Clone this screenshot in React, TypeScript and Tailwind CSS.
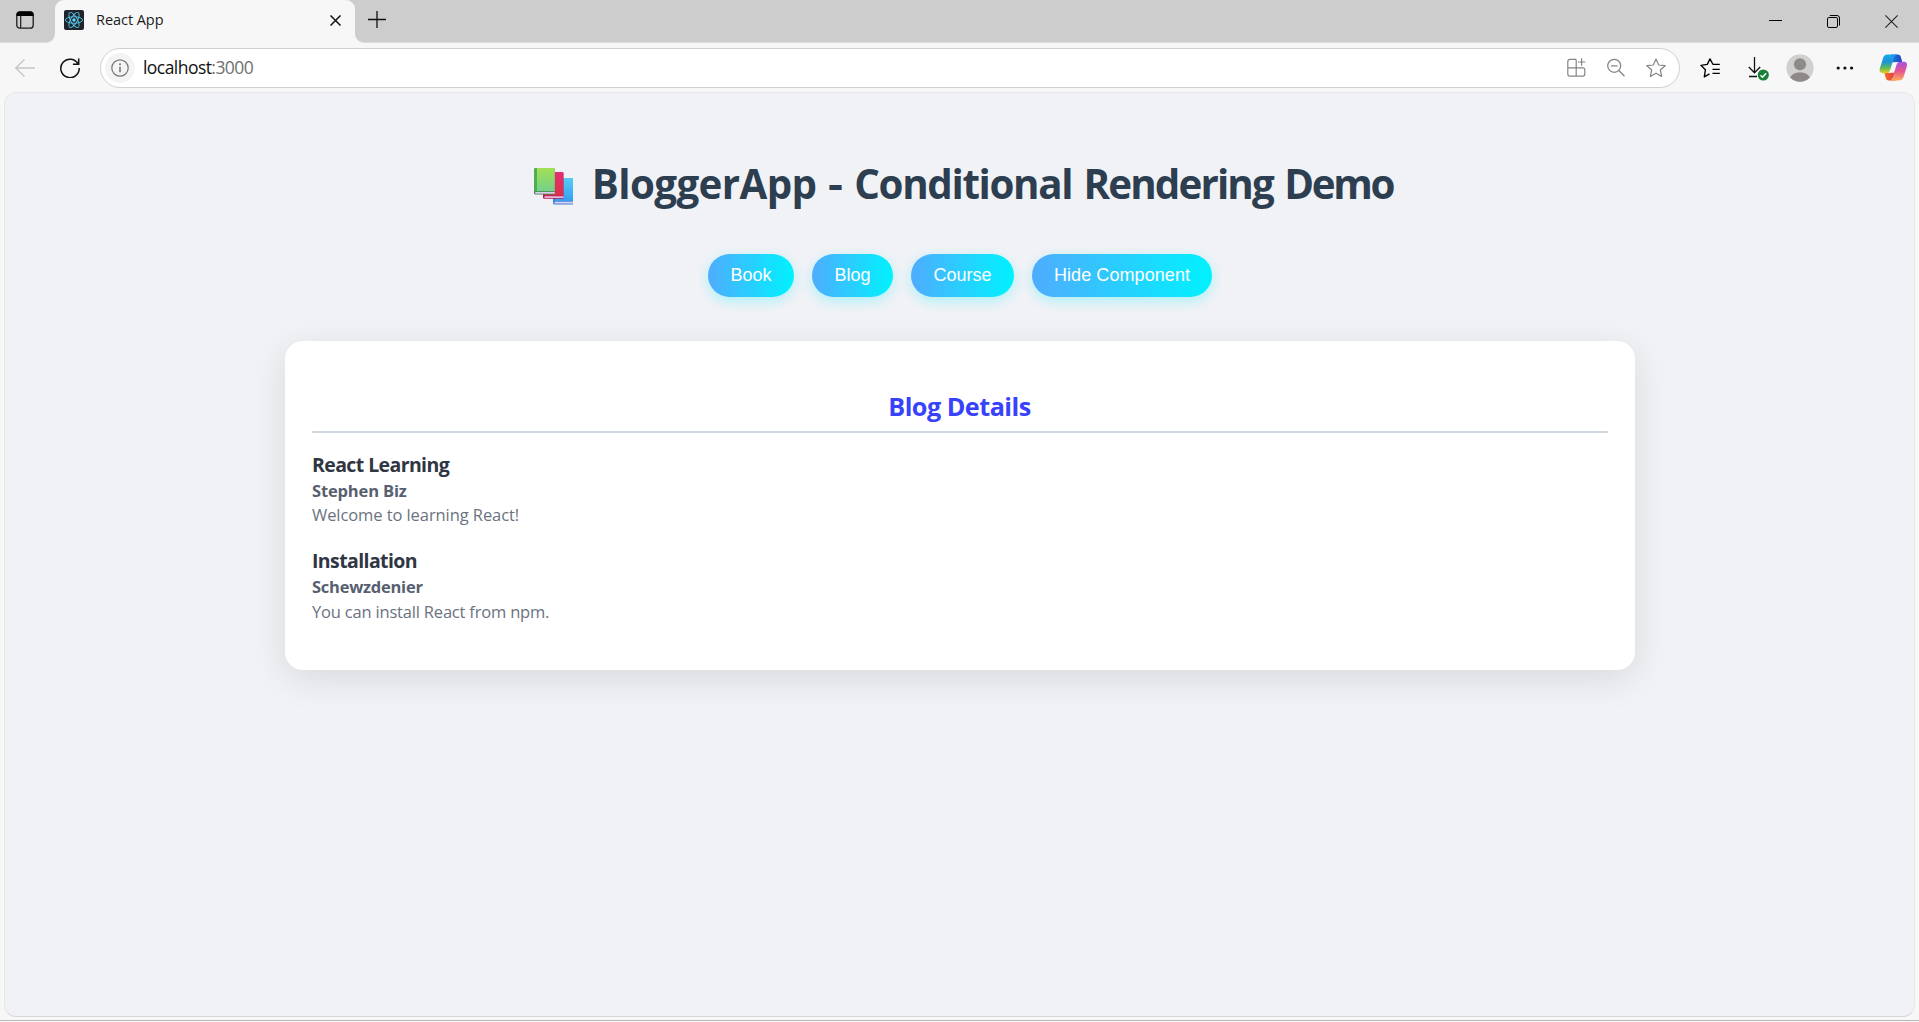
import React from "react";

const posts = [
  { title: "React Learning", titleCls: "tracking-[-0.6px]", author: "Stephen Biz", authorCls: "tracking-[-0.15px]", text: "Welcome to learning React!", textCls: "tracking-[-0.08px]", leading: "leading-[23px]" },
  { title: "Installation", titleCls: "tracking-[-0.6px]", author: "Schewzdenier", authorCls: "tracking-[-0.25px]", text: "You can install React from npm.", textCls: "tracking-[-0.19px]", leading: "leading-[25px]" },
];

function TabStrip() {
  return (
    <div className="flex h-[43px] bg-[#f7f7f7]">
      <div className="flex h-[43px] w-[55px] items-start rounded-br-[9px] border-b border-[#dcdcdc] bg-[#cdcdcd] pt-[11px] pl-4">
        <svg width="18" height="18" viewBox="0 0 18 18" fill="none">
          <rect x="0.8" y="0.8" width="16.4" height="16.4" rx="3" stroke="#1b1b1b" strokeWidth="1.3" />
          <path d="M0.6 5V3.5A3 3 0 0 1 3.6 .5h10.8a3 3 0 0 1 3 3V5z" fill="#000" />
          <path d="M4.7 5v12" stroke="#1b1b1b" strokeWidth="1.2" />
        </svg>
      </div>
      <div className="h-[42px] w-[300px] bg-[#cdcdcd]">
        <div className="flex h-[43px] items-start rounded-t-[9px] bg-[#f7f7f7] pl-[9px]">
          <svg className="mt-[10px]" width="20" height="20" viewBox="0 0 20 20" fill="none">
            <rect width="20" height="20" rx="2" fill="#20232a" />
            <g stroke="#53c1de" strokeWidth="0.95">
              <ellipse cx="10" cy="10" rx="8.6" ry="3.3" />
              <ellipse cx="10" cy="10" rx="8.6" ry="3.3" transform="rotate(60 10 10)" />
              <ellipse cx="10" cy="10" rx="8.6" ry="3.3" transform="rotate(120 10 10)" />
            </g>
            <circle cx="10" cy="10" r="1.7" fill="#61dafb" />
          </svg>
          <span className="mt-[10px] ml-3 w-[234px] text-[14.5px] leading-5 tracking-[-0.05px] text-[#1b1b1b]">React App</span>
          <svg className="mt-[15px]" width="11" height="11" viewBox="0 0 11 11" stroke="#111" strokeWidth="1.5">
            <path d="M.5.5l10 10M10.5.5l-10 10" />
          </svg>
        </div>
      </div>
      <div className="flex h-[43px] flex-1 items-start rounded-bl-[9px] border-b border-[#dcdcdc] bg-[#cdcdcd]">
        <svg className="mt-[11px] ml-[13px]" width="18" height="18" viewBox="0 0 18 18" stroke="#111" strokeWidth="1.3">
          <path d="M9 0v17M0 8.5h18" />
        </svg>
        <div className="flex-1" />
        <svg className="mt-[14px] mr-[45px]" width="13" height="14" viewBox="0 0 13 14">
          <path d="M0 6.5h13" stroke="#000" />
        </svg>
        <svg className="mt-[15px] mr-[45px]" width="13" height="13" viewBox="0 0 13 13" fill="none" stroke="#000">
          <rect x=".5" y="2.5" width="10" height="10" rx="1.4" />
          <path d="M2.8 .5H10a2.5 2.5 0 0 1 2.5 2.5v7.5" />
        </svg>
        <svg className="mt-[15px] mr-[21px]" width="13" height="13" viewBox="0 0 13 13" stroke="#222" strokeWidth="1.1">
          <path d="M.4.4l12.2 12.2M12.6.4L.4 12.6" />
        </svg>
      </div>
    </div>
  );
}

const star = "M10 1l2.7 6 6.5.7-4.9 4.3 1.4 6.5L10 15.2l-5.7 3.3 1.4-6.5L.8 7.7l6.5-.7z";

function Toolbar() {
  return (
    <div className="flex h-[49px] items-center bg-[#f7f7f7]">
      <svg className="ml-[15px]" width="20" height="18" viewBox="0 0 20 18" fill="none" stroke="#c6c6c6" strokeWidth="1.3">
        <path d="M20 9H.8M9.5.5L.8 9l8.7 8.5" />
      </svg>
      <svg className="ml-[25px]" width="20" height="20" viewBox="0 0 20 20" fill="none" stroke="#111" strokeWidth="1.5">
        <path d="M18.2 6.2A9.2 9.2 0 1 0 19.2 10M18.7 .5v5.8h-5.8" />
      </svg>
      <div className="ml-5 flex h-10 w-[1580px] items-center rounded-full border border-[#d0d0d0] bg-white pl-1">
        <div className="flex size-[30px] items-center justify-center rounded-full bg-[#f4f4f4]">
          <svg width="18" height="18" viewBox="0 0 18 18" fill="none" stroke="#757575" strokeWidth="1.2">
            <circle cx="9" cy="9" r="8.2" />
            <path d="M9 7.8v5.4" strokeWidth="1.6" />
            <circle cx="9" cy="5.3" r="1" fill="#757575" stroke="none" />
          </svg>
        </div>
        <div className="mb-px ml-2 text-[17.5px] leading-6 tracking-[-0.55px] text-[#111]">
          localhost<span className="text-[#707070]">:3000</span>
        </div>
        <div className="flex-1" />
        <svg width="19" height="19" viewBox="0 0 19 19" fill="none" stroke="#858585" strokeWidth="1.2">
          <path d="M9.2 1.4H3A2.2 2.2 0 0 0 .8 3.6V16A2.2 2.2 0 0 0 3 18.2h12.6a2.2 2.2 0 0 0 2.2-2.2v-4.4a1.8 1.8 0 0 0-1.8-1.8H.8M9.2 1.4v16.8M14.6.3v7.4M10.9 4h7.4" />
        </svg>
        <svg className="ml-[21px]" width="18" height="19" viewBox="0 0 18 19" fill="none" stroke="#858585" strokeWidth="1.3">
          <circle cx="7.2" cy="7.8" r="6.5" />
          <path d="M3.8 7.8h6.8M11.9 12.5l5.6 5.7" />
        </svg>
        <svg className="mr-[13px] ml-[21px]" width="20" height="20" viewBox="0 0 20 20" fill="none" stroke="#858585" strokeWidth="1.2" strokeLinejoin="round">
          <path d={star} />
        </svg>
      </div>
      <svg className="ml-5" width="20" height="20" viewBox="0 0 20 20" fill="none" stroke="#000" strokeWidth="1.35" strokeLinejoin="round">
        <path d="M19.8 6.3h-6.9L10 .9 7.3 6.4.9 7.3l4.5 4.5-1.1 7 5.2-2.9M12.5 11.3h7.3M12.5 15.4h7.3" />
      </svg>
      <svg className="mt-[3px] ml-[28px]" width="22" height="24" viewBox="0 0 22 24" fill="none" stroke="#111" strokeWidth="1.3">
        <path d="M6.5 0v15.5M.8 10l5.7 5.8 5.7-5.8M1 19.5h8" />
        <circle cx="15.3" cy="18" r="5.6" fill="#188038" stroke="none" />
        <path d="M12.5 18.2l2 2 3.6-4" stroke="#fff" strokeWidth="1.4" />
      </svg>
      <svg className="ml-4" width="28" height="28" viewBox="0 0 28 28">
        <defs>
          <clipPath id="avatar">
            <circle cx="14" cy="14" r="13.7" />
          </clipPath>
        </defs>
        <g clipPath="url(#avatar)">
          <circle cx="14" cy="14" r="14" fill="#d2d0ce" />
          <circle cx="14" cy="10.3" r="6.1" fill="#8e8a88" />
          <ellipse cx="14" cy="25.2" rx="10" ry="7" fill="#8e8a88" />
        </g>
      </svg>
      <svg className="ml-[22px]" width="18" height="4" viewBox="0 0 18 4" fill="#111">
        <circle cx="2.2" cy="2" r="1.6" />
        <circle cx="8.9" cy="2" r="1.6" />
        <circle cx="15.6" cy="2" r="1.6" />
      </svg>
      <svg className="ml-[25px]" width="29" height="27" viewBox="0 0 29 27">
        <defs>
          <linearGradient id="cpA" x1="0" y1="0" x2="0" y2="1">
            <stop offset="0" stopColor="#17a6ee" />
            <stop offset=".4" stopColor="#1f93d6" />
            <stop offset=".7" stopColor="#5cba59" />
            <stop offset="1" stopColor="#f2cf1d" />
          </linearGradient>
          <linearGradient id="cpB" x1="0" y1="0" x2="0" y2="1">
            <stop offset="0" stopColor="#a453e8" />
            <stop offset=".5" stopColor="#e8548f" />
            <stop offset="1" stopColor="#fdab5c" />
          </linearGradient>
          <linearGradient id="cpC" x1="0" y1="0" x2="1" y2="0">
            <stop offset="0" stopColor="#1a7fe0" />
            <stop offset="1" stopColor="#2340c0" />
          </linearGradient>
          <linearGradient id="cpD" x1="0" y1="0" x2="1" y2="0">
            <stop offset="0" stopColor="#f0702c" />
            <stop offset="1" stopColor="#e63a3c" />
          </linearGradient>
        </defs>
        <path d="M12 .6h6.800c1.800 0 2.600 1 3.100 2.700L23.400 8.600h-5.500c-1.800 0-2.600.6-3.300 2.500L12 15z" fill="url(#cpC)" />
        <path d="M16.600 26.400H9.800c-1.800 0-2.600-1-3.100-2.700L5.200 18.400h5.500c1.800 0 2.600-.6 3.300-2.500L16.600 12z" fill="url(#cpD)" />
        <path d="M13.500 8.300h6.300L15.200 18.700H9.200L12.300 10z" fill="#f7f7f7" />
        <path d="M8.500.6h9.500c-2.300.6-2.900 2.300-3.600 4.700L11.300 15.500c-.8 2.600-1.900 3.800-4.300 3.800H4.300C1 19.300.100 17.300.800 14.600L4 4.300C4.800 1.800 6.200.6 8.500.6z" fill="url(#cpA)" />
        <path d="M20.100 26.400h-9.500c2.300-.6 2.900-2.300 3.600-4.700L17.300 11.500c.8-2.600 1.900-3.800 4.300-3.800h2.700c3.300 0 4.200 2 3.500 4.700L24.600 22.700c-.8 2.500-2.200 3.700-4.500 3.700z" fill="url(#cpB)" />
      </svg>
    </div>
  );
}

function Books() {
  return (
    <svg className="mt-[12px] mr-[18px] shrink-0" width="40" height="38" viewBox="0 0 40 38">
      <defs>
        <linearGradient id="bkG" x1="0" y1="0" x2="0" y2="1">
          <stop offset="0" stopColor="#a4e052" />
          <stop offset="1" stopColor="#74d08c" />
        </linearGradient>
        <linearGradient id="bkR" x1="0" y1="0" x2="0" y2="1">
          <stop offset="0" stopColor="#e52e72" />
          <stop offset="1" stopColor="#dc3148" />
        </linearGradient>
        <linearGradient id="bkB" x1="0" y1="0" x2="0" y2="1">
          <stop offset="0" stopColor="#55cdf5" />
          <stop offset="1" stopColor="#369ff0" />
        </linearGradient>
      </defs>
      <path d="M19 12a2 2 0 0 1 2-2h17a1 1 0 0 1 1 1v25.500H20.500a1.500 1.500 0 0 1-1.500-1.500z" fill="#3f7fd6" />
      <path d="M21 10h17a1 1 0 0 1 1 1v22H21z" fill="url(#bkB)" />
      <path d="M20.500 33.700H39v1.800H20.500z" fill="#dcd3f0" />
      <path d="M9 6a2 2 0 0 1 2-2h17a1.400 1.400 0 0 1 1.400 1.400V30.700H10.500A1.500 1.500 0 0 1 9 29.200z" fill="#b51c52" />
      <path d="M11 4h17a1.400 1.400 0 0 1 1.400 1.400V27.500H11z" fill="url(#bkR)" />
      <path d="M10.500 28.300h18.900v1.600H10.500z" fill="#ecc9e8" />
      <path d="M0 2a2 2 0 0 1 2-2h17.500a1.300 1.300 0 0 1 1.300 1.300V26.500H1.500A1.500 1.500 0 0 1 0 25z" fill="#46804f" />
      <path d="M0 2a2 2 0 0 1 2-2h1v23.500H0z" fill="#4fae52" />
      <path d="M3 0h16.500a1.300 1.300 0 0 1 1.300 1.300v21.900H3z" fill="url(#bkG)" />
      <path d="M1.200 24h19.600v1.700H1.200z" fill="#d9cfea" />
    </svg>
  );
}

function PillButton({ width, children }: { width: string; children: React.ReactNode }) {
  return (
    <button className={`${width} h-[43px] rounded-full bg-[linear-gradient(to_right,#4facfe,#00f2fe)] text-center font-['Liberation_Sans',sans-serif] text-[18px] leading-[21px] whitespace-nowrap text-white shadow-[0_4px_13px_rgba(0,242,254,0.3)]`}>
      {children}
    </button>
  );
}

export default function App() {
  return (
    <div className="flex h-[1022px] w-[1919px] flex-col overflow-hidden bg-[#f7f7f7] font-['Open_Sans','Noto_Sans',sans-serif]">
      <TabStrip />
      <Toolbar />
      <main className="mr-[4px] ml-[4px] h-[925px] rounded-[12px] border border-[#e7e7e9] border-b-[#d6d6d8] bg-[#f1f2f6] pt-[65px]">
        <h1 className="flex h-[54px] justify-center pl-[8px] text-[40.300px] leading-[54px] font-bold whitespace-nowrap text-[#2c3e50]">
          <span className="-mt-[2px] flex"><Books /></span>
          <span className="-mt-px [word-spacing:0.900px]">
            <span className="tracking-[-0.600px]">BloggerApp</span> <span className="inline-block origin-left scale-x-[1.150] pr-[2px]">-</span>{" "}
            <span className="tracking-[-1.350px]">Conditional</span> <span className="tracking-[-1.850px]">Rendering</span>{" "}
            <span className="tracking-[-2.300px]">Demo</span>
          </span>
        </h1>
        <div className="mt-[42px] flex justify-center gap-[18px] pl-px">
          <PillButton width="w-[86px]">Book</PillButton>
          <PillButton width="w-[81px]">Blog</PillButton>
          <PillButton width="w-[103px]">Course</PillButton>
          <PillButton width="w-[180px]"><span className="tracking-[0.080px]">Hide Component</span></PillButton>
        </div>
        <section className="mx-auto mt-[44px] h-[329px] w-[1350px] rounded-[18px] bg-white px-[27px] pt-12 shadow-[0_9px_36px_rgba(0,0,0,0.1)]">
          <h2 className="h-[44px] border-b-2 border-[#d0d8e2] text-center text-[25.200px] leading-[34px] font-bold text-[#3742fa]">
            <span className="tracking-[-0.500px]">Blog Details</span>
          </h2>
          <div className="flex flex-col gap-[21px] pt-[18px]">
            {posts.map((p) => (
              <article key={p.title} className="h-[75px] pl-[0.500px]">
                <h3 className="h-7 text-[19.500px] leading-[27px] font-bold text-[#2f3542]"><span className={p.titleCls}>{p.title}</span></h3>
                <h4 className="h-6 text-[16.500px] leading-6 font-bold text-[#57606f]"><span className={p.authorCls}>{p.author}</span></h4>
                <p className={`h-6 text-[16.500px] text-[#6b7280] ${p.leading}`}><span className={p.textCls}>{p.text}</span></p>
              </article>
            ))}
          </div>
        </section>
      </main>
      <div className="mt-[3px] h-px bg-[#b9b9b9]" />
    </div>
  );
}
